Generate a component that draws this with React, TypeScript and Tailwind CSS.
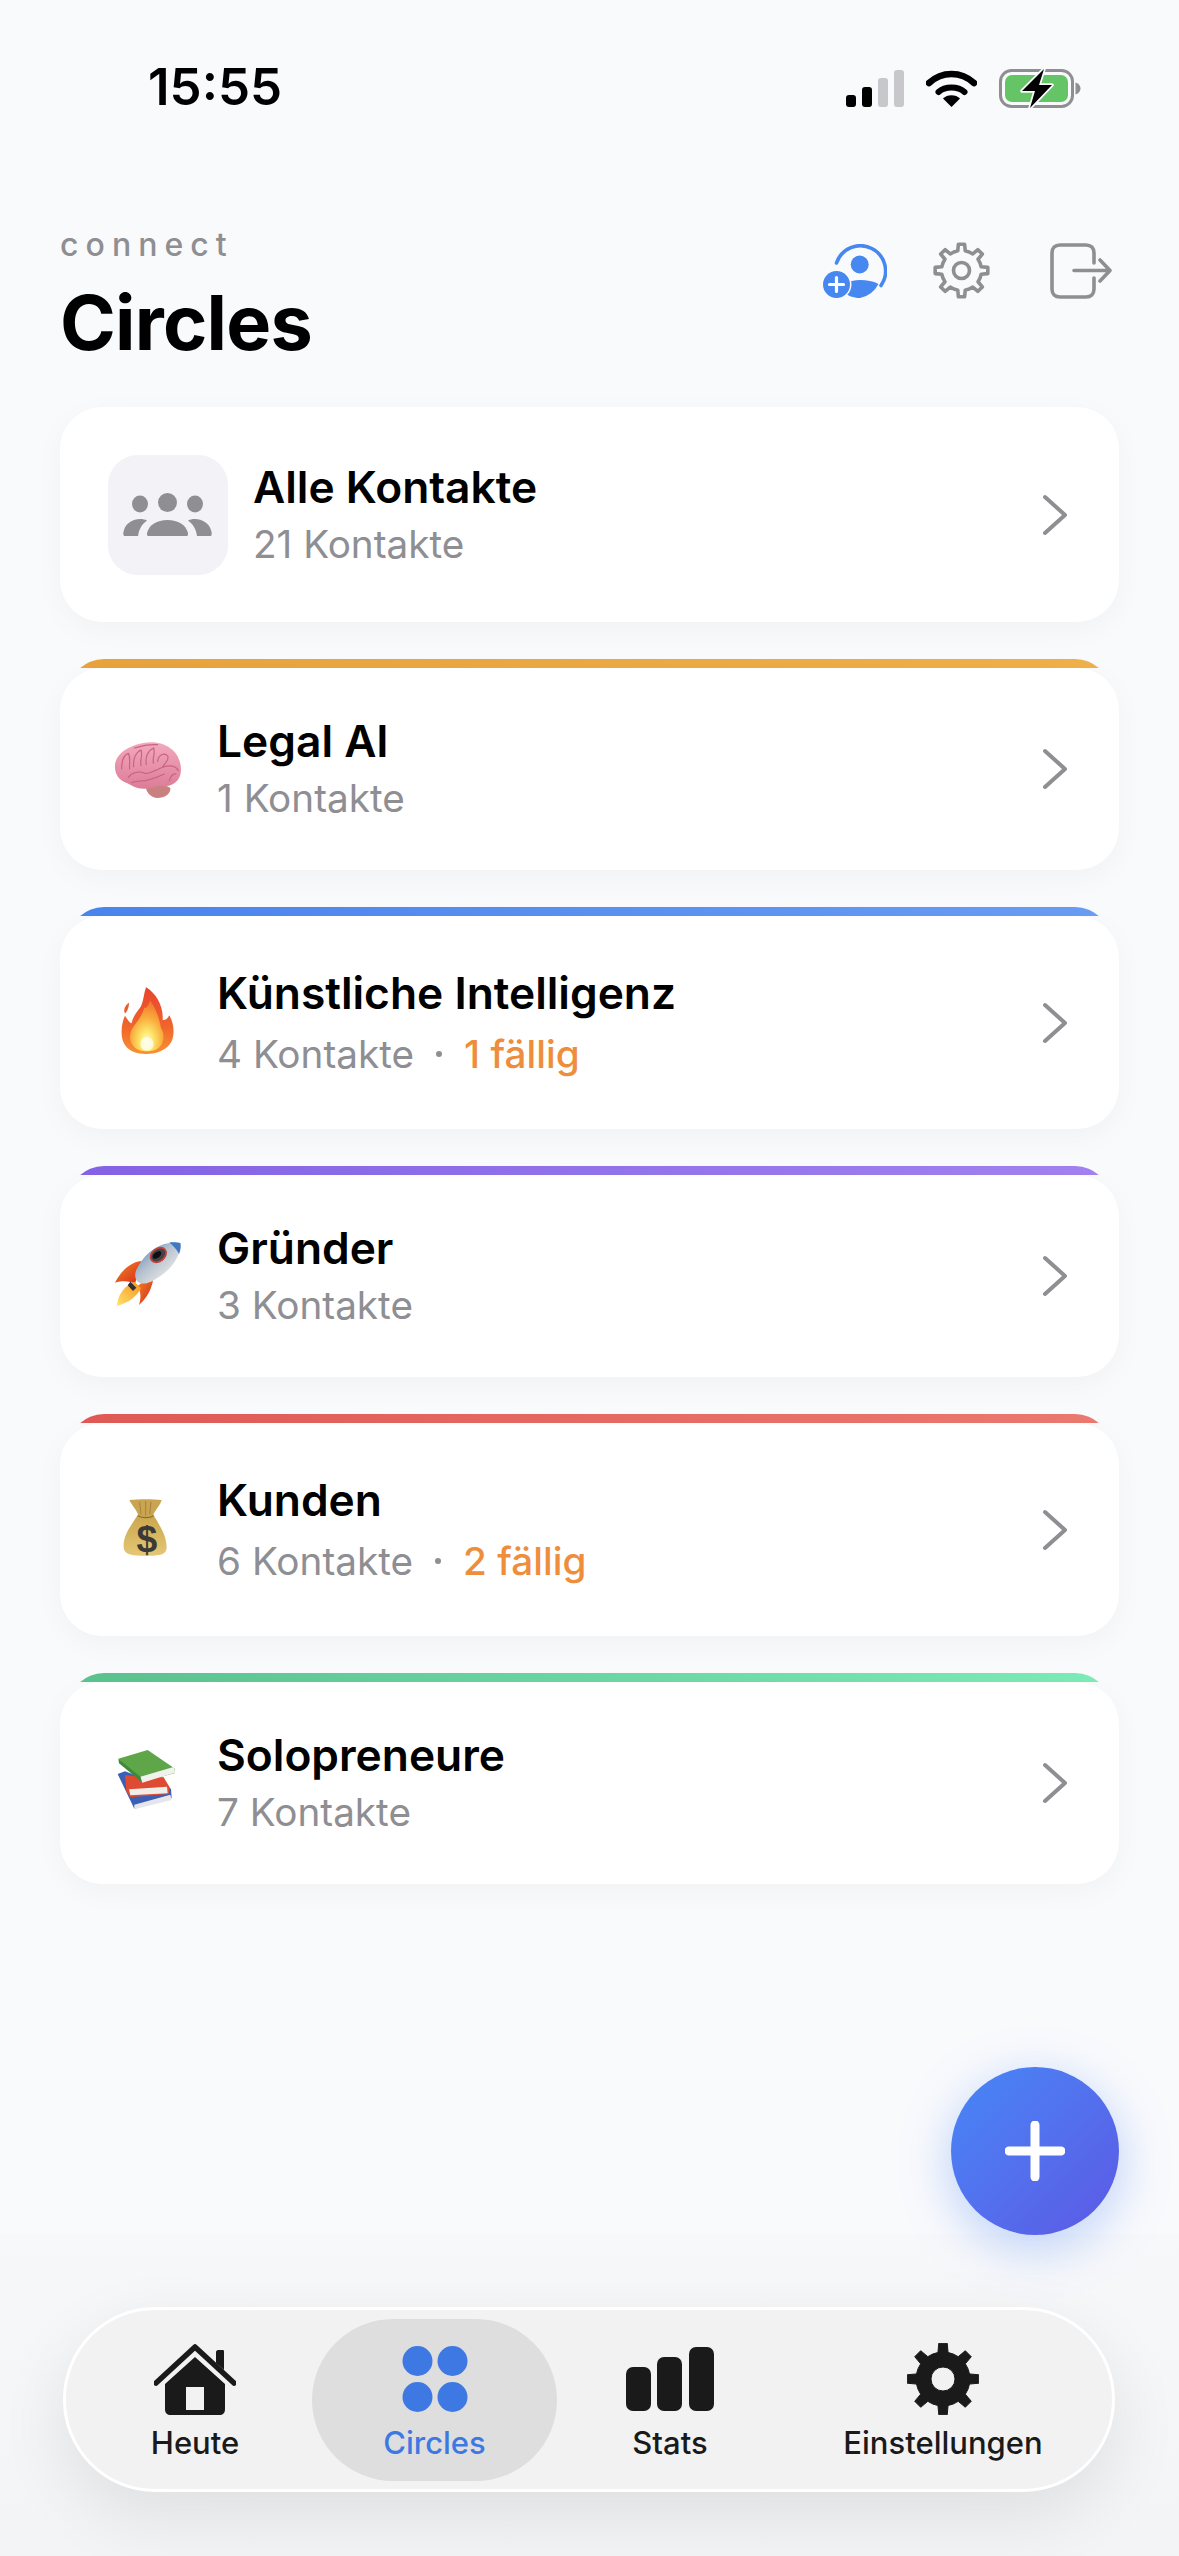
import type { ReactNode } from "react";

function gearPath(c: number, outer: number, inner: number, teeth: number) {
  // teeth start at 12 o'clock
  const pts: string[] = [];
  const step = (Math.PI * 2) / teeth;
  for (let i = 0; i < teeth; i++) {
    const a = i * step - Math.PI / 2;
    const corners: [number, number][] = [
      [a - step * 0.5, inner],
      [a - step * 0.24, inner],
      [a - step * 0.15, outer],
      [a + step * 0.15, outer],
      [a + step * 0.24, inner],
    ];
    for (const [ang, r] of corners) {
      pts.push(`${(c + Math.cos(ang) * r).toFixed(2)} ${(c + Math.sin(ang) * r).toFixed(2)}`);
    }
  }
  return `M${pts.join("L")}Z`;
}

function StatusIcons() {
  return (
    <div className="flex items-center">
      <svg width="58" height="37" viewBox="0 0 58 37">
        <rect x="0" y="25" width="10" height="12" rx="3" fill="#000" />
        <rect x="16" y="17" width="10" height="20" rx="3" fill="#000" />
        <rect x="32" y="8" width="10" height="29" rx="3" fill="#c7c7cc" />
        <rect x="48" y="0" width="10" height="37" rx="3" fill="#c7c7cc" />
      </svg>
      <svg className="ml-[22px]" width="51" height="37" viewBox="0 0 51 37">
        <path d="M3 13C16 1 35 1 48 13" fill="none" stroke="#000" strokeWidth="6.5" strokeLinecap="round" />
        <path d="M12.5 22C19 16 32 16 38.500 22" fill="none" stroke="#000" strokeWidth="6" strokeLinecap="round" />
        <path d="M17 28.500C21 24 30 24 34 28.500L25.500 37Z" fill="#000" />
      </svg>
      <svg className="ml-[22px]" width="82" height="39" viewBox="0 0 82 39">
        <rect x="1.500" y="1.500" width="72" height="36" rx="11" fill="none" stroke="#8e8e93" strokeWidth="3" />
        <rect x="6" y="6" width="63" height="27" rx="7" fill="#65c466" />
        <path d="M76.500 13.500C80 14.500 81.500 17 81.500 19.500C81.500 22 80 24.500 76.500 25.500Z" fill="#8e8e93" />
        <path d="M45 0L23 22H36L31 39L53 16H40Z" fill="#000" stroke="#f9fafc" strokeWidth="3.500" strokeLinejoin="round" paintOrder="stroke" />
      </svg>
    </div>
  );
}

function AddPersonIcon() {
  return (
    <svg width="64" height="54" viewBox="0 0 64 54">
      <path d="M13.500 19A25.200 25.200 0 1 1 58 41.500" fill="none" stroke="#4687f0" strokeWidth="3.600" strokeLinecap="round" />
      <circle cx="36.700" cy="20.500" r="9" fill="#4687f0" />
      <path d="M20 40C26 37 32 36 37 36C44 36 50 37 55.500 40A27 27 0 0 1 37 54C30 54 25 52 20 47Z" fill="#4687f0" />
      <circle cx="13.500" cy="40.500" r="13.500" fill="#4687f0" stroke="#f9fafc" strokeWidth="3" paintOrder="stroke" />
      <path d="M13.500 33.500V47.500M6.500 40.500H20.500" stroke="#fff" strokeWidth="3.200" strokeLinecap="round" />
    </svg>
  );
}

function GearOutline() {
  return (
    <svg width="57" height="57" viewBox="0 0 57 57">
      <path d={gearPath(28.5, 26.5, 20, 8)} fill="none" stroke="#8e8e93" strokeWidth="3.600" strokeLinejoin="round" />
      <circle cx="28.500" cy="28.500" r="8" fill="none" stroke="#8e8e93" strokeWidth="3.600" />
    </svg>
  );
}

function LogoutIcon() {
  return (
    <svg width="62" height="56" viewBox="0 0 62 56">
      <path d="M44 20V10C44 5 41 2 36 2H10C5 2 2 5 2 10V46C2 51 5 54 10 54H36C41 54 44 51 44 46V35" fill="none" stroke="#8e8e93" strokeWidth="3.600" strokeLinecap="round" />
      <path d="M24 27.500H60M50 17L60 27.500L50 38" fill="none" stroke="#8e8e93" strokeWidth="3.600" strokeLinecap="round" strokeLinejoin="round" />
    </svg>
  );
}

function PeopleIcon() {
  return (
    <svg width="90" height="44" viewBox="0 0 90 44" fill="#8e8e93">
      <ellipse cx="17" cy="11" rx="8" ry="8.500" />
      <ellipse cx="44.500" cy="9.500" rx="9.500" ry="9.500" />
      <ellipse cx="72" cy="11" rx="8" ry="8.500" />
      <path d="M1 43C0 41 0 40 1 37C3 30 10 26 17 26C20 26 22 26.500 24 27.500C19 31 16 36 15 43Z" />
      <path d="M88 43C89 41 89 40 88 37C86 30 79 26 72 26C69 26 67 26.500 65 27.500C70 31 73 36 74 43Z" />
      <path d="M25 43C24 43 24 41 24 40C26 32 34 27 44.500 27C55 27 63 32 65 40C65 41 65 43 64 43Z" />
    </svg>
  );
}

function Brain() {
  return (
    <svg className="shrink-0" width="90" height="90" viewBox="0 0 270 270">
      <defs>
        <linearGradient id="brainFill" x1="0" y1="0" x2="0" y2="1">
          <stop offset="0" stopColor="#f3a9bd" />
          <stop offset="1" stopColor="#dc7c98" />
        </linearGradient>
      </defs>
      <path d="M135 190C150 180 190 178 208 192C210 210 190 222 170 222C150 222 135 205 135 190Z" fill="#c9817f" />
      <path d="M42 122C44 95 72 72 105 62C140 50 185 50 215 78C240 100 245 140 235 160C225 182 200 190 180 186C160 184 140 200 110 192C95 188 82 178 70 174C50 165 40 145 42 122Z" fill="url(#brainFill)" />
      <g fill="none" stroke="#c9627f" strokeWidth="3.500" strokeLinecap="round">
        <path d="M62 135C62 110 70 92 82 88C90 100 84 120 86 135" />
        <path d="M98 128C96 105 104 85 120 78C126 92 116 110 120 125" />
        <path d="M136 122C132 100 140 80 158 72C164 90 152 105 158 118" />
        <path d="M170 112C172 92 190 84 200 96C206 110 190 116 186 128" />
        <path d="M82 160C92 145 115 140 130 148C145 152 165 138 185 130C205 122 225 125 232 140" />
        <path d="M92 176C110 170 120 172 135 170C155 165 170 160 190 150" />
        <path d="M205 170C210 155 215 148 225 150" />
        <path d="M100 72C120 66 140 60 170 62" />
      </g>
    </svg>
  );
}

function Fire() {
  return (
    <svg className="shrink-0" width="90" height="90" viewBox="0 0 270 270">
      <defs>
        <linearGradient id="fireOuter" x1="0" y1="0" x2="0" y2="1">
          <stop offset="0" stopColor="#e8432c" />
          <stop offset="0.6" stopColor="#f0662c" />
          <stop offset="1" stopColor="#f79233" />
        </linearGradient>
        <radialGradient id="fireInner" cx="0.5" cy="0.8" r="0.75">
          <stop offset="0" stopColor="#fffde6" />
          <stop offset="0.25" stopColor="#fde96c" />
          <stop offset="0.65" stopColor="#f9a93b" />
          <stop offset="1" stopColor="#f37a2d" />
        </radialGradient>
      </defs>
      <path d="M135 28C165 45 188 85 185 125C195 128 200 120 205 112C218 135 222 165 212 190C198 216 170 228 135 228C100 228 78 218 66 190C58 165 62 135 72 113C80 125 86 135 92 136C95 115 110 100 120 85C128 68 128 48 135 28Z" fill="url(#fireOuter)" />
      <path d="M148 68C170 100 176 130 180 150C190 165 192 190 175 208C160 224 115 224 100 208C82 190 84 165 98 145C110 130 125 110 130 88C135 95 142 80 148 68Z" fill="url(#fireInner)" />
      <circle cx="138" cy="198" r="20" fill="#fffef0" opacity="0.8" />
      <path d="M84 74C84 88 78 102 72 106C66 96 72 82 84 74Z" fill="#ec5a30" />
    </svg>
  );
}

function Rocket() {
  return (
    <svg className="shrink-0" width="90" height="90" viewBox="0 0 270 270">
      <defs>
        <linearGradient id="rocketBody" x1="0" y1="0" x2="1" y2="1">
          <stop offset="0" stopColor="#4a7fc4" />
          <stop offset="0.45" stopColor="#b7c3cf" />
          <stop offset="0.75" stopColor="#e3e3e3" />
          <stop offset="1" stopColor="#8e8e8e" />
        </linearGradient>
        <linearGradient id="rocketFlame" x1="1" y1="0" x2="0" y2="1">
          <stop offset="0" stopColor="#f7931e" />
          <stop offset="1" stopColor="#ffe26a" />
        </linearGradient>
        <linearGradient id="rocketFin" x1="0" y1="0" x2="1" y2="1">
          <stop offset="0" stopColor="#f08a24" />
          <stop offset="1" stopColor="#d8261c" />
        </linearGradient>
      </defs>
      <path d="M122 90C100 92 68 105 42 155C65 148 88 150 102 158Z" fill="url(#rocketFin)" />
      <path d="M158 128C158 150 150 190 114 222C122 198 118 178 110 165Z" fill="url(#rocketFin)" />
      <path d="M100 152L120 172C108 195 85 215 48 225C50 190 70 165 100 152Z" fill="url(#rocketFlame)" />
      <path d="M238 36C240 80 205 125 150 152C130 160 118 160 108 150C100 138 100 125 112 105C140 55 190 28 238 36Z" fill="url(#rocketBody)" />
      <path d="M205 34C222 50 232 62 234 70C240 55 240 44 238 36C228 33 215 33 205 34Z" fill="#3f78c0" />
      <path d="M88 152L106 170L96 180L80 163Z" fill="#2f3033" />
      <ellipse cx="172" cy="72" rx="26" ry="19" transform="rotate(-38 172 72)" fill="#43434a" stroke="#c8423a" strokeWidth="5" />
      <ellipse cx="168" cy="72" rx="15" ry="9" transform="rotate(-38 168 72)" fill="#101013" />
    </svg>
  );
}

function MoneyBag() {
  return (
    <svg className="shrink-0" width="90" height="90" viewBox="0 0 270 270">
      <defs>
        <linearGradient id="bagFill" x1="0" y1="0" x2="0" y2="1">
          <stop offset="0" stopColor="#c9a54c" />
          <stop offset="1" stopColor="#e5c776" />
        </linearGradient>
      </defs>
      <path d="M112 88C88 125 66 150 68 188C70 210 95 212 135 212C178 212 198 210 197 185C196 150 175 120 156 88Z" fill="url(#bagFill)" />
      <path d="M85 46C105 42 165 42 182 46C178 60 160 78 156 92C140 100 125 100 112 92C108 76 92 60 85 46Z" fill="#c9a552" />
      <path d="M116 50L120 88M134 48V92M150 50L146 88" stroke="#a5833a" strokeWidth="3" />
      <path d="M110 92C125 100 145 100 158 92" fill="none" stroke="#8a6c2c" strokeWidth="3.500" />
      <text x="138" y="200" textAnchor="middle" fontFamily="Liberation Sans, sans-serif" fontWeight="700" fontSize="112" fill="#3c3a36">$</text>
    </svg>
  );
}

function Books() {
  return (
    <svg className="shrink-0" width="90" height="90" viewBox="0 0 270 270">
      <path d="M50 108L72 100L210 152L212 180L100 212Z" fill="#3a5fb5" />
      <path d="M100 200L208 170L212 186L100 214Z" fill="#e6e6ea" />
      <path d="M72 112L188 118L206 148L204 168L88 178L76 160Z" fill="#de4a32" />
      <path d="M84 154L198 146L200 166L88 172Z" fill="#f1eeea" />
      <path d="M52 62L140 36L222 92L220 106L122 132Z" fill="#5ea648" />
      <path d="M118 116L220 86L222 104L124 134Z" fill="#f1f1ee" />
      <path d="M118 116L52 62L54 76L122 132Z" fill="#3f8a3a" />
    </svg>
  );
}

function Chevron() {
  return (
    <svg className="ml-auto shrink-0" width="26" height="42" viewBox="0 0 26 42">
      <path d="M3 3L23 21L3 39" fill="none" stroke="#8e8e93" strokeWidth="4" strokeLinecap="round" strokeLinejoin="round" />
    </svg>
  );
}

type Circle = {
  name: string;
  contacts: number;
  due?: number;
  stripe: string;
  emoji: ReactNode;
};

const circles: Circle[] = [
  { name: "Legal AI", contacts: 1, stripe: "from-[#e8a33d] to-[#f0b04a]", emoji: <Brain /> },
  { name: "Künstliche Intelligenz", contacts: 4, due: 1, stripe: "from-[#4a85ee] to-[#6a9df5]", emoji: <Fire /> },
  { name: "Gründer", contacts: 3, stripe: "from-[#8463e6] to-[#a283f0]", emoji: <Rocket /> },
  { name: "Kunden", contacts: 6, due: 2, stripe: "from-[#e05a55] to-[#ec7a70]", emoji: <MoneyBag /> },
  { name: "Solopreneure", contacts: 7, stripe: "from-[#5bc28e] to-[#7eecb8]", emoji: <Books /> },
];

function CircleCard({ circle }: { circle: Circle }) {
  return (
    <div>
      <div className="mx-[8px] h-[9px] overflow-hidden">
        <div className={`h-[40px] rounded-t-[36px] bg-gradient-to-r ${circle.stripe}`} />
      </div>
      <div className={`flex items-center rounded-[42px] bg-white pr-[51px] pl-[48px] shadow-[0_8px_30px_rgba(0,0,0,0.035)] ${circle.due ? "h-[213px]" : "h-[202px]"}`}>
        <div className="flex w-[76px] shrink-0 items-center justify-center">{circle.emoji}</div>
        <div className="ml-[33px]">
          <div className={`text-[44.300px] leading-[52px] font-semibold text-black ${circle.due ? "mb-[10px]" : "mb-[6px]"}`}>{circle.name}</div>
          <div className="flex items-center text-[38.700px] leading-[50px] text-[#8e8e93]">
            <span>{circle.contacts} Kontakte</span>
            {circle.due ? (
              <>
                <span className="mx-[22px] h-[6px] w-[6px] rounded-full bg-[#8e8e93]" />
                <span className="font-medium text-[#ee8e3c]">{circle.due} fällig</span>
              </>
            ) : null}
          </div>
        </div>
        <Chevron />
      </div>
    </div>
  );
}

function NavItem({ label, width, active, children }: { label: string; width: string; active?: boolean; children: ReactNode }) {
  return (
    <div className={`flex h-[162px] shrink-0 flex-col items-center rounded-[82px] pt-[24px] ${width} ${active ? "bg-[#dedede]" : ""}`}>
      <div className="flex h-[72px] items-center">{children}</div>
      <div className={`mt-[8px] text-[31px] leading-[40px] font-medium ${active ? "text-[#3d78e3]" : "text-[#1a1a1a]"}`}>{label}</div>
    </div>
  );
}

export default function App() {
  return (
    <div className="relative flex h-[2556px] w-[1179px] flex-col overflow-hidden bg-[#f9fafc] font-['Inter','Liberation_Sans',sans-serif]">
      {/* status bar */}
      <div className="flex h-[225px] items-start justify-between pt-[62px] pr-[98px] pl-[148px]">
        <div className="text-[51px] leading-[50px] font-semibold text-black">15:55</div>
        <div className="pt-[7px]">
          <StatusIcons />
        </div>
      </div>

      {/* header */}
      <div className="flex h-[182px] items-start justify-between pr-[67px] pl-[60px]">
        <div>
          <div className="text-[32px] leading-[40px] font-medium tracking-[0.22em] text-[#8e8e93]">connect</div>
          <div className="mt-[16px] text-[75.500px] leading-[84px] font-bold tracking-[-0.01em] text-black">Circles</div>
        </div>
        <div className="flex items-center pt-[17px]">
          <AddPersonIcon />
          <div className="ml-[46px]">
            <GearOutline />
          </div>
          <div className="ml-[60px]">
            <LogoutIcon />
          </div>
        </div>
      </div>

      {/* list */}
      <div className="flex flex-col gap-[37px] px-[60px]">
        <div className="flex h-[215px] items-center rounded-[42px] bg-white pr-[51px] pl-[48px] shadow-[0_8px_30px_rgba(0,0,0,0.035)]">
          <div className="flex h-[120px] w-[120px] shrink-0 items-center justify-center rounded-[30px] bg-[#f2f2f7]">
            <PeopleIcon />
          </div>
          <div className="ml-[25px]">
            <div className="mb-[6px] text-[44.300px] leading-[52px] font-semibold text-black">Alle Kontakte</div>
            <div className="text-[38.700px] leading-[50px] text-[#8e8e93]">21 Kontakte</div>
          </div>
          <Chevron />
        </div>
        {circles.map((c) => (
          <CircleCard key={c.name} circle={c} />
        ))}
      </div>

      {/* floating add button */}
      <div className="absolute top-[2067px] left-[951px] flex h-[168px] w-[168px] items-center justify-center rounded-full bg-gradient-to-br from-[#4587f7] to-[#5b58e4] shadow-[0_12px_50px_rgba(70,130,245,0.35)]">
        <svg width="60" height="60" viewBox="0 0 60 60">
          <path d="M30 4V56M4 30H56" stroke="#fff" strokeWidth="9" strokeLinecap="round" />
        </svg>
      </div>

      {/* tab bar */}
      <div className="mt-auto h-[322px] bg-gradient-to-b from-[#f7f8fa] to-[#f3f4f6] pt-[73px] pl-[63px]">
        <div className="flex h-[185px] w-[1052px] items-center rounded-[92px] border-[3px] border-white bg-[#f2f2f3] pl-[12px] shadow-[0_24px_70px_rgba(0,0,0,0.09)]">
          <NavItem label="Heute" width="w-[234px]">
            <svg width="82" height="72" viewBox="0 0 82 72">
              <path d="M2 40L41 4L80 40" fill="none" stroke="#1a1a1a" strokeWidth="5.500" strokeLinecap="round" strokeLinejoin="round" />
              <path d="M62 20V9C62 8 63 7 64 7H69C70 7 70 8 70 9V27" fill="#1a1a1a" />
              <path fillRule="evenodd" d="M41 14L71 41V66C71 70 69 72 65 72H17C13 72 11 70 11 66V41ZM32 44V67H50V44Z" fill="#1a1a1a" />
            </svg>
          </NavItem>
          <NavItem label="Circles" width="w-[245px]" active>
            <svg width="66" height="66" viewBox="0 0 66 66" fill="#3d78e3">
              <circle cx="15.500" cy="15" r="15" />
              <circle cx="50.500" cy="15" r="15" />
              <circle cx="15.500" cy="51" r="15" />
              <circle cx="50.500" cy="51" r="15" />
            </svg>
          </NavItem>
          <NavItem label="Stats" width="w-[226px]">
            <svg width="88" height="64" viewBox="0 0 88 64" fill="#1a1a1a">
              <rect x="0" y="20" width="25" height="44" rx="7" />
              <rect x="31" y="10" width="25" height="54" rx="7" />
              <rect x="63" y="0" width="25" height="64" rx="7" />
            </svg>
          </NavItem>
          <NavItem label="Einstellungen" width="w-[320px]">
            <svg width="72" height="72" viewBox="0 0 72 72">
              <path fillRule="evenodd" d={`${gearPath(36, 36, 27, 8)}M36 24A12 12 0 1 0 36 48A12 12 0 1 0 36 24Z`} fill="#1a1a1a" stroke="#1a1a1a" strokeWidth="1" strokeLinejoin="round" />
            </svg>
          </NavItem>
        </div>
      </div>
    </div>
  );
}
